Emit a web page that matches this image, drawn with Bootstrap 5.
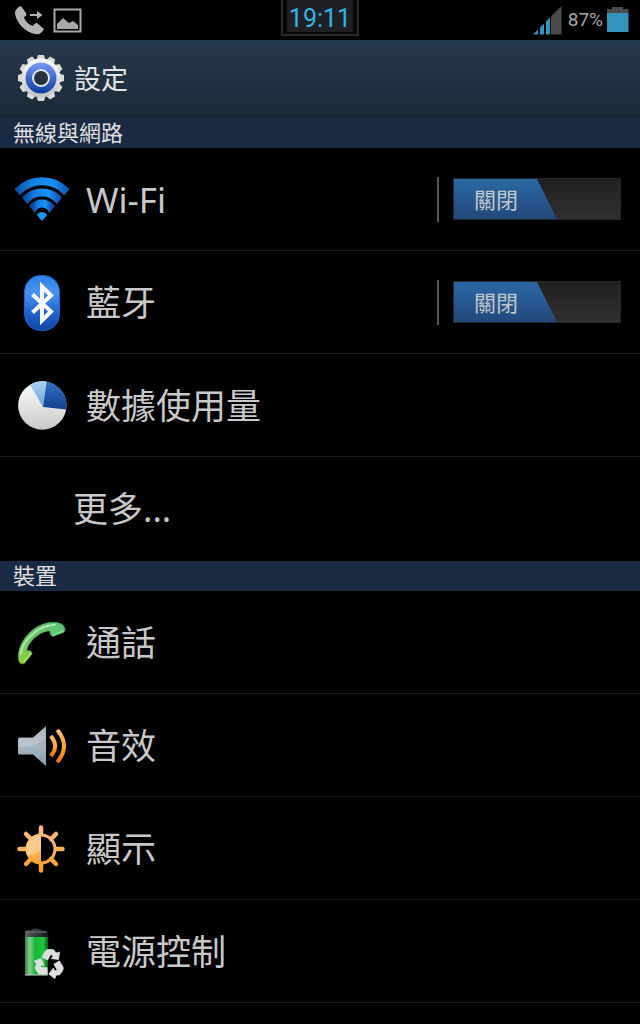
<!DOCTYPE html>
<html lang="zh-Hant">
<head>
<meta charset="utf-8">
<meta name="viewport" content="width=device-width, initial-scale=1">
<title>設定</title>
<link href="https://cdn.jsdelivr.net/npm/bootstrap@5.3.0/dist/css/bootstrap.min.css" rel="stylesheet">
<style>
  body { background: #000; color: #c8c8c8; font-family: Roboto, "Noto Sans CJK TC", sans-serif; }
  svg { display: block; flex: none; overflow: visible; }
  .status-bar { height: 40px; padding: 0 11px 0 14px; }
  .clock { height: 36px; padding: 0 4px 4px; border: 1px solid #2b2b2b; border-width: 0 2px 2px; background: #060606; }
  .clock time { display: block; height: 32px; padding: 0 2px; background: #1e2023; color: #33b5e5; font-size: 25px; line-height: 38px; }
  .battery-level { font-size: 19px; line-height: 40px; color: #a6a6a6; }
  .app-header { height: 78px; padding: 0 18px; background: linear-gradient(#28394f, #1a2a36 94%, #15232f); border-top: 1px solid #1f3f52; }
  .app-header h1 { font-size: 27px; line-height: 40px; color: #e4e4e4; font-weight: 400; }
  .section-title { height: 30px; padding: 0 13px; font-size: 22px; line-height: 31px; font-weight: 400; color: #e0e0e0; background: #1a2a42; }
  .settings { padding-bottom: 1px; }
  .setting { height: 103px; padding: 0 19px 0 14px; border-bottom: 1px solid #1b1b1b; }
  .setting a { color: #c8c8c8; font-family: "Noto Sans", "Noto Sans CJK TC", sans-serif; font-size: 35px; line-height: 48px; gap: 16px; }
  .setting-name { padding-top: 2px; }
  .setting .no-icon { padding-left: 59px; }
  .settings .last-row { border-bottom-color: #000; }
  .switch-area { border-left: 2px solid #585858; height: 45px; padding-left: 14px; }
  .switch-track { width: 168px; height: 42px; background: linear-gradient(#202020, #303030); border: 1px solid #262626; cursor: pointer; }
  .switch-thumb { display: block; width: 103px; height: 40px; padding-left: 20px; font-size: 22px; line-height: 44px; color: #c2c6ca;
    background: linear-gradient(#2a68a4, #23487a); clip-path: polygon(0 0, 83px 0, 100% 100%, 0 100%); }
</style>
</head>
<body>
<header>
  <div class="status-bar d-flex justify-content-between position-relative">
    <div class="d-flex align-items-center gap-2">
      <svg width="31" height="30" viewBox="13 5 31 30" fill="#b4b4b4" role="img" aria-label="來電轉接">
        <path d="M20 6c-3 1-6 4-6 7 1 10 11 20 21 21 3 1 6-1 8-5l-7-6c-2 0-3 1-4 3-4-1-8-5-9-9 2-1 3-2 2-4z"/>
        <path d="M29 14h7v-3l5.500 4-5.500 4v-3h-7z"/>
      </svg>
      <svg width="30" height="26" viewBox="53 7 30 26" role="img" aria-label="圖片">
        <path d="M54.500 9.500h26v22h-26z" fill="none" stroke="#a8a8a8" stroke-width="2"/>
        <path d="M57 29v-5l6-6 6 5 4-2 5 4v4z" fill="#a8a8a8"/>
      </svg>
    </div>
    <div class="clock position-absolute top-0 start-50 translate-middle-x"><time>19:11</time></div>
    <div class="d-flex">
      <svg width="35" height="40" viewBox="534 0 35 40" role="img" aria-label="訊號">
        <path d="M534 34.500l5-5v5zM541 34.500v-7l4-4v11zM547 34.500v-13l4-4v17z" fill="#3094bd"/>
        <path d="M552 34.500v-18l10.500-10.500v28.500z" fill="#4b4b4b"/>
      </svg>
      <span class="battery-level me-1">87%</span>
      <svg width="22" height="40" viewBox="607 0 22 40" role="img" aria-label="電池">
        <path d="M607 13v-4h5v-2h11v2h5.500v4z" fill="#4b4b4b"/><path d="M607 13h21.500v19h-21.500z" fill="#3094bd"/>
      </svg>
    </div>
  </div>
  <div class="app-header d-flex align-items-center gap-2">
    <svg width="48" height="48" viewBox="-23 -22 48 48" aria-hidden="true">
      <defs>
        <linearGradient id="gearMetal" x1="0" y1="0" x2="0" y2="1"><stop stop-color="#fff"/><stop offset="1" stop-color="#c2c2c2"/></linearGradient>
        <linearGradient id="gearBlue" x1="0" y1="0" x2="0" y2="1"><stop stop-color="#7a9cf5"/><stop offset=".5" stop-color="#3f68cf"/><stop offset="1" stop-color="#0b409c"/></linearGradient>
        <path id="tooth" d="M-4.500-18l1.500-5h6l1.500 5z"/>
      </defs>
      <g fill="#dadada">
        <use href="#tooth"/><use href="#tooth" transform="rotate(30)"/><use href="#tooth" transform="rotate(60)"/><use href="#tooth" transform="rotate(90)"/>
        <use href="#tooth" transform="rotate(120)"/><use href="#tooth" transform="rotate(150)"/><use href="#tooth" transform="rotate(180)"/><use href="#tooth" transform="rotate(210)"/>
        <use href="#tooth" transform="rotate(240)"/><use href="#tooth" transform="rotate(270)"/><use href="#tooth" transform="rotate(300)"/><use href="#tooth" transform="rotate(330)"/>
      </g>
      <circle r="19.500" fill="url(#gearMetal)"/>
      <circle r="15.500" fill="url(#gearBlue)"/>
      <circle r="8" fill="#22323f" stroke="#e6e6e6" stroke-width="2"/>
    </svg>
    <h1 class="m-0">設定</h1>
  </div>
</header>
<main>
  <h2 class="section-title m-0">無線與網路</h2>
  <ul class="settings list-unstyled m-0">
    <li class="setting d-flex align-items-center">
      <a href="#wifi" class="d-flex align-items-center flex-grow-1 text-decoration-none">
        <svg width="56" height="56" viewBox="14 171 56 56" aria-hidden="true">
          <defs>
            <clipPath id="wifiFan"><path d="M42 221L3.300 176V165h77.400v11z"/></clipPath>
            <linearGradient id="wifiBlue"><stop offset=".1" stop-color="#0a4aa0"/><stop offset=".35" stop-color="#1580e0"/><stop offset=".65" stop-color="#1890f4"/><stop offset=".9" stop-color="#0d55b0"/></linearGradient>
          </defs>
          <g clip-path="url(#wifiFan)" fill="none" stroke="url(#wifiBlue)" stroke-width="8">
            <circle cx="42" cy="215" r="33.800"/><circle cx="42" cy="215" r="22.500"/><circle cx="42" cy="215" r="11.500"/>
            <circle cx="42" cy="217.500" r="5.500" fill="#189af8" stroke="none"/>
          </g>
        </svg>
        <span class="setting-name">Wi-Fi</span>
      </a>
      <div class="switch-area d-flex align-items-center">
        <label class="switch-track"><input class="visually-hidden" type="checkbox" role="switch" aria-label="Wi-Fi"><span class="switch-thumb">關閉</span></label>
      </div>
    </li>
    <li class="setting d-flex align-items-center">
      <a href="#bluetooth" class="d-flex align-items-center flex-grow-1 text-decoration-none">
        <svg width="56" height="56" viewBox="14 274 56 56" aria-hidden="true">
          <defs>
            <linearGradient id="btBlue" x1="0" y1="0" x2="0" y2="1"><stop stop-color="#2f80ea"/><stop offset=".3" stop-color="#4a94f0"/><stop offset=".65" stop-color="#2466cc"/><stop offset="1" stop-color="#0f45a2"/></linearGradient>
          </defs>
          <rect x="24.500" y="275.500" width="35" height="55" rx="16" fill="url(#btBlue)" stroke="#1e66cc"/>
          <path d="M32.500 294.500L51 311.500 42 320.500V286.500L51 295.500 32.500 312.500" fill="none" stroke="#fff" stroke-width="4"/>
        </svg>
        <span class="setting-name">藍牙</span>
      </a>
      <div class="switch-area d-flex align-items-center">
        <label class="switch-track"><input class="visually-hidden" type="checkbox" role="switch" aria-label="藍牙"><span class="switch-thumb">關閉</span></label>
      </div>
    </li>
    <li class="setting d-flex align-items-center">
      <a href="#data" class="d-flex align-items-center flex-grow-1 text-decoration-none">
        <svg width="56" height="56" viewBox="14 377 56 56" aria-hidden="true">
          <defs>
            <linearGradient id="pieWhite" x1="0" y1="0" x2="0" y2="1"><stop stop-color="#fff"/><stop offset="1" stop-color="#c9c9c9"/></linearGradient>
            <linearGradient id="pieBlue" x1="0" y1="0" x2="0" y2="1"><stop stop-color="#3170c4"/><stop offset="1" stop-color="#12408f"/></linearGradient>
            <linearGradient id="pieSky" x1="0" y1="0" x2="0" y2="1"><stop stop-color="#a9d2f3"/><stop offset="1" stop-color="#6fa3d8"/></linearGradient>
          </defs>
          <circle cx="42.300" cy="405.500" r="24.200" fill="url(#pieWhite)"/>
          <path d="M43 407L30 384.700A24.200 24.200 0 0 1 46.500 381.700z" fill="url(#pieSky)"/>
          <path d="M43 407L46.500 381.700A24.200 24.200 0 0 1 66.200 409.500z" fill="url(#pieBlue)"/>
        </svg>
        <span class="setting-name">數據使用量</span>
      </a>
    </li>
    <li class="setting last-row d-flex align-items-center">
      <a href="#more" class="setting-name no-icon flex-grow-1 text-decoration-none">更多...</a>
    </li>
  </ul>
  <h2 class="section-title m-0">裝置</h2>
  <ul class="settings list-unstyled m-0">
    <li class="setting d-flex align-items-center">
      <a href="#call" class="d-flex align-items-center flex-grow-1 text-decoration-none">
        <svg width="56" height="56" viewBox="12 12 168 168" aria-hidden="true">
          <defs><linearGradient id="callGreen" x1="1" y1="0" x2="0" y2="1"><stop stop-color="#5cc47c"/><stop offset=".5" stop-color="#6fc46e"/><stop offset="1" stop-color="#8bd03e"/></linearGradient></defs>
          <path d="M25 140C25 95 70 38 130 37C150 37 165 45 165 60L162 67 130 79C122 79 120 72 120 63C95 62 56 90 50 122C60 120 67 124 66 132L42 161C30 164 25 155 25 140z" fill="url(#callGreen)" stroke="#4a9e50" stroke-width="2" stroke-linejoin="round"/>
          <path d="M32 132C36 95 80 47 135 44" fill="none" stroke="#b4e8b0" stroke-width="5" stroke-linecap="round"/>
          <path d="M42 156L62 131" stroke="#a4ec56" stroke-width="5" stroke-linecap="round"/>
          <path d="M130 75L160 63" stroke="#80f08c" stroke-width="4" stroke-linecap="round"/>
        </svg>
        <span class="setting-name">通話</span>
      </a>
    </li>
    <li class="setting d-flex align-items-center">
      <a href="#sound" class="d-flex align-items-center flex-grow-1 text-decoration-none">
        <svg width="56" height="56" viewBox="14 718 56 56" aria-hidden="true">
          <defs>
            <linearGradient id="hornGrey" x1="0" y1="0" x2="0" y2="1"><stop stop-color="#8e9aa4"/><stop offset=".5" stop-color="#a9b6c2"/><stop offset="1" stop-color="#8a9cab"/></linearGradient>
            <linearGradient id="waveOrange" x1="0" y1="0" x2="0" y2="1"><stop stop-color="#ffb877"/><stop offset=".6" stop-color="#ffa12b"/><stop offset="1" stop-color="#f07c16"/></linearGradient>
          </defs>
          <path d="M18 740q0-1.500 1.500-1.500H33L46 727v40L33 755.500H19.500q-1.500 0-1.500-1.500z" fill="url(#hornGrey)"/>
          <path d="M18.500 748v-9H33L45.500 728v12q-12 9-27 8z" fill="#dce4ec" opacity=".35"/>
          <g fill="none" stroke="url(#waveOrange)" stroke-width="4" stroke-linecap="square">
            <path d="M52 738.500Q58.500 747 52 755.500"/><path d="M58.500 732.500Q69.500 747 58.500 761.500"/>
          </g>
        </svg>
        <span class="setting-name">音效</span>
      </a>
    </li>
    <li class="setting d-flex align-items-center">
      <a href="#display" class="d-flex align-items-center flex-grow-1 text-decoration-none">
        <svg width="56" height="56" viewBox="-27 -28 56 56" aria-hidden="true">
          <defs><linearGradient id="sunOrange" gradientUnits="userSpaceOnUse" x1="0" y1="-23" x2="0" y2="23"><stop stop-color="#ffb98a"/><stop offset=".5" stop-color="#ffb55c"/><stop offset="1" stop-color="#ff9a20"/></linearGradient></defs>
          <g transform="translate(0 1)" stroke="url(#sunOrange)">
            <path d="M-.01-15V-21.500M.01 15v6.500M-15-.01h-6.500M15 .01h6.500M-10-10l-5-5M10-10l5-5M-10 10l-5 5M10 10l5 5" stroke-width="4.500" stroke-linecap="round"/>
            <circle r="14" fill="none" stroke-width="3"/>
            <path d="M0-14A14 14 0 0 0 0 14z" fill="url(#sunOrange)" stroke="none"/>
            <path d="M0-14v14Q-6 7-14 6A15 15 0 0 1 0-14z" fill="#ffe0b8" opacity=".5" stroke="none"/>
          </g>
        </svg>
        <span class="setting-name">顯示</span>
      </a>
    </li>
    <li class="setting d-flex align-items-center">
      <a href="#power" class="d-flex align-items-center flex-grow-1 text-decoration-none">
        <svg width="56" height="56" viewBox="14 923 56 56" aria-hidden="true">
          <defs>
            <linearGradient id="cellGreen"><stop stop-color="#3c7d48"/><stop offset=".2" stop-color="#7ed08c"/><stop offset=".45" stop-color="#18b33a"/><stop offset=".8" stop-color="#19c93c"/><stop offset="1" stop-color="#0a5a1c"/></linearGradient>
            <linearGradient id="cellCap"><stop stop-color="#5a5d60"/><stop offset=".4" stop-color="#3c3f42"/><stop offset="1" stop-color="#17191b"/></linearGradient>
            <path id="recycleArm" d="M-7.500-7L-4.500-12.500q1-2 3-2h4q2 0 3 2l1 1.500L10-12 9-4.500 1.500-5.500 3.500-7.500 1.500-10-2-4z"/>
          </defs>
          <path d="M25 936h23v39H25z" fill="url(#cellGreen)"/>
          <path d="M25 937v-5q0-1.500 2-1.500h4q1-2 5.500-2t5.500 2h4q2 0 2 1.500v5z" fill="url(#cellCap)"/>
          <path d="M25 975h23" stroke="#d0d0d0"/>
          <path d="M25.500 932h21" stroke="#777b7f"/>
          <g transform="translate(49.500 964)" fill="#dedede" stroke="#dedede" stroke-width=".8" stroke-linejoin="round">
            <use href="#recycleArm"/><use href="#recycleArm" transform="rotate(120)"/><use href="#recycleArm" transform="rotate(240)"/>
          </g>
        </svg>
        <span class="setting-name">電源控制</span>
      </a>
    </li>
  </ul>
</main>
</body>
</html>
